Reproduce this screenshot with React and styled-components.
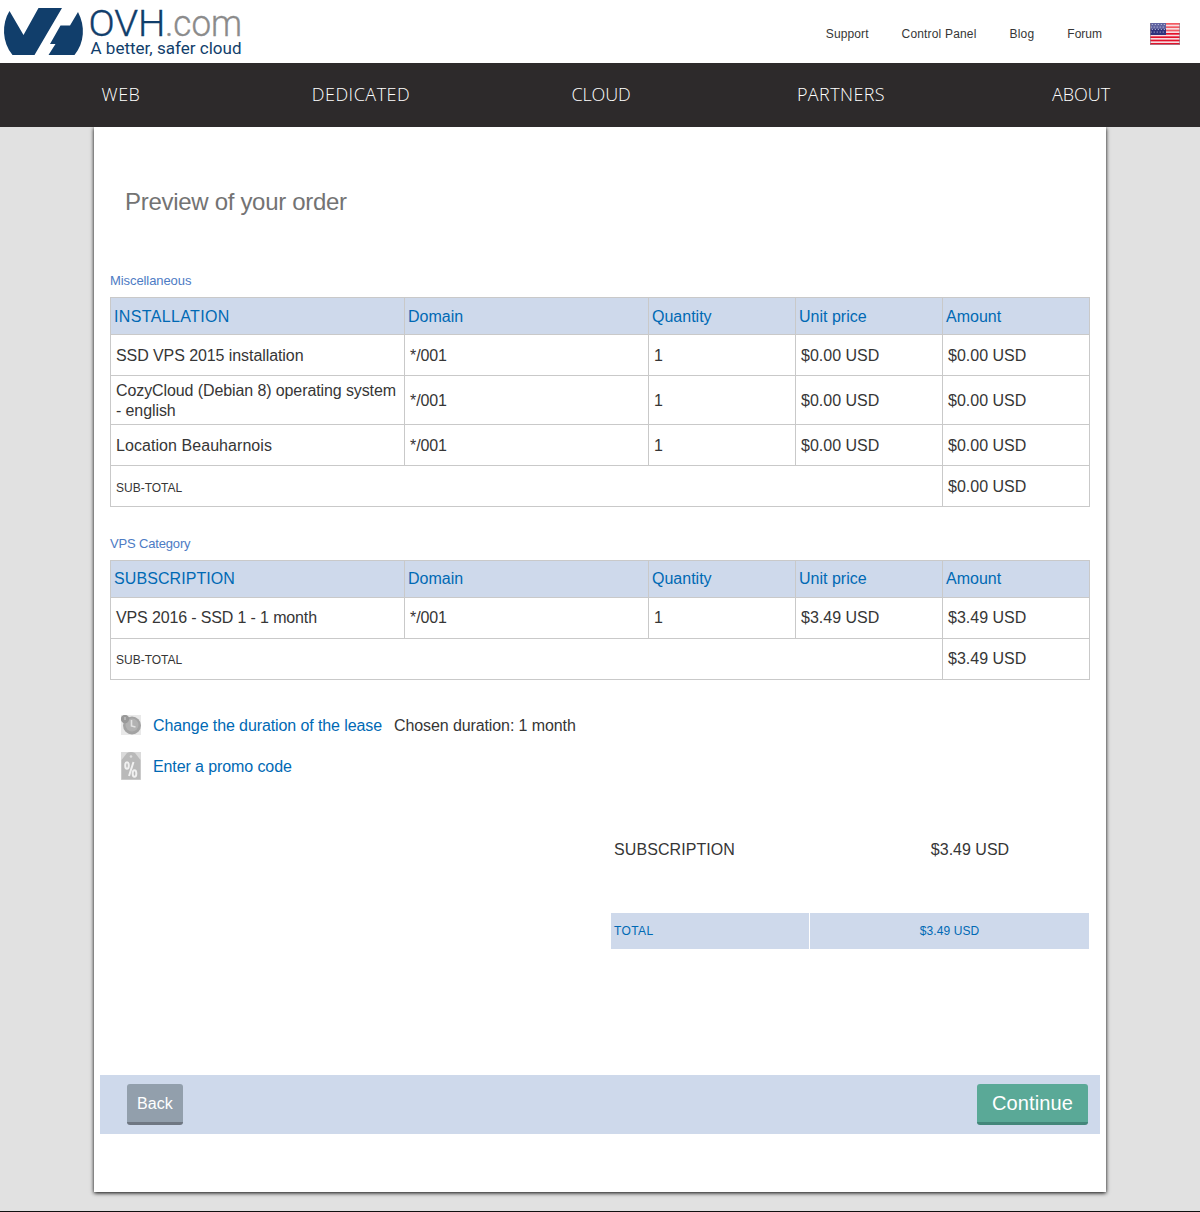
import React from "react";
import styled, { createGlobalStyle, css } from "styled-components";

const ink = "#363636";
const link = "#0069b4";
const band = "#ced9eb";
const line = "#c9c9c9";

const GlobalStyle = createGlobalStyle`
  * { box-sizing: border-box; }
  body {
    margin: 0;
    background: #e1e1e1;
    color: ${ink};
    font-family: "Liberation Sans", Arial, sans-serif;
    font-size: 16px;
    line-height: 20px;
  }
`;

const Screen = styled.div`
  display: flex;
  flex-direction: column;
  width: 1200px;
  height: 1212px;
  border-bottom: 1px solid #111;
`;

const TopBar = styled.header`
  display: flex;
  justify-content: space-between;
  height: 63px;
  background: #fff;
`;

const LogoArt = styled.svg`
  display: block;
  width: 250px;
  height: 63px;
`;

const LogoWord = styled.text`
  font-family: Roboto, sans-serif;
  font-weight: ${(p) => p.$weight};
  font-size: ${(p) => p.$size}px;
  fill: ${(p) => p.$fill};
  stroke: ${(p) => p.$fill};
  stroke-width: ${(p) => p.$stroke || 0}px;
`;

const TopLinks = styled.nav`
  display: flex;
  align-items: center;
  padding: 5px 20px 0 0;
`;

const TopLink = styled.a`
  margin-right: ${(p) => p.$gap || 33}px;
  font-size: 12px;
  line-height: 16px;
  letter-spacing: ${(p) => p.$track || 0}px;
`;

const Flag = styled.svg`
  display: block;
  width: 30px;
  height: 22px;
`;

const MainNav = styled.nav`
  position: relative;
  display: grid;
  grid-template-columns: repeat(5, 240px);
  height: 64px;
  background: #2d2a2b;
`;

const MainLink = styled.a`
  display: flex;
  align-items: center;
  justify-content: center;
  padding: 0 0 2px 2px;
  color: #fff;
  font-family: "Open Sans", sans-serif;
  font-size: 18px;
  font-weight: 300;
  letter-spacing: ${(p) => p.$track}px;
`;

const Sheet = styled.main`
  width: 1012px;
  height: 1065px;
  margin: 0 auto;
  padding: 60px 6px 0;
  background: #fff;
  box-shadow: 0 1px 4px #000;
`;

const Title = styled.h1`
  margin: 0 0 57px;
  padding-left: 25px;
  color: #737373;
  font-size: 24px;
  font-weight: 400;
  line-height: 30px;
  letter-spacing: -0.3px;
`;

const Body = styled.div`
  display: flex;
  flex-direction: column;
  padding: 0 10px;
`;

const Section = styled.section`
  margin-bottom: ${(p) => p.$after}px;
`;

const Caption = styled.h2`
  margin: 0;
  height: 23px;
  color: #4d7bc4;
  font-size: 13px;
  font-weight: 400;
  line-height: 14px;
  letter-spacing: ${(p) => p.$track}px;
`;

const Table = styled.table`
  width: 980px;
  table-layout: fixed;
  border-collapse: collapse;
`;

const Row = styled.tr`
  height: ${(p) => p.$height || 41}px;
`;

const HeadCell = styled.th`
  padding: ${(p) => (p.$lowered ? "1px 3px 0" : "0 3px 1px")};
  border: 1px solid ${line};
  background: ${band};
  color: ${link};
  font-weight: 400;
  text-align: left;
  letter-spacing: ${(p) => p.$track || 0}px;
`;

const Cell = styled.td`
  padding: ${(p) => (p.$lowered ? "2px 5px 0" : "0 5px")};
  border: 1px solid ${line};
  white-space: pre-line;
  letter-spacing: ${(p) => p.$track || 0}px;
  ${(p) =>
    p.$label &&
    css`
      padding-top: ${p.$lowered ? 3 : 1}px;
      font-size: 12px;
    `}
`;

const Options = styled.div`
  display: flex;
  flex-direction: column;
  padding-left: 11px;
`;

const Option = styled.div`
  display: flex;
  align-items: center;
  height: 41px;
  letter-spacing: -0.1px;
`;

const OptionIcon = styled.svg`
  display: block;
  width: 20px;
  height: ${(p) => p.$height}px;
  margin: 0 12px 2px 0;
`;

const OptionLink = styled.a`
  margin-right: 12px;
  color: ${link};
`;

const Summary = styled.div`
  display: grid;
  grid-template-columns: 198px 279px;
  column-gap: 1px;
  align-self: flex-end;
  margin: 43px 1px 0 0;
  width: 478px;
`;

const SummaryLabel = styled.div`
  height: 83px;
  padding: 10px 3px;
  letter-spacing: 0.08px;
`;

const SummaryValue = styled.div`
  height: 83px;
  padding: 10px 0 10px 41px;
  text-align: center;
`;

const TotalCell = styled.div`
  height: 36px;
  padding: ${(p) => (p.$center ? 0 : "0 3px")};
  background: ${band};
  color: ${link};
  font-size: 12px;
  line-height: 36px;
  letter-spacing: ${(p) => (p.$center ? 0.1 : 0.4)}px;
  text-align: ${(p) => (p.$center ? "center" : "left")};
`;

const Actions = styled.footer`
  display: flex;
  justify-content: space-between;
  height: 59px;
  margin-top: 126px;
  padding: 9px 12px 0 27px;
  background: ${band};
`;

const Button = styled.button`
  height: 41px;
  padding: 1px 0 0;
  width: ${(p) => p.$width}px;
  border: 0;
  border-bottom: 3px solid ${(p) => p.$edge};
  border-radius: 3px;
  background: ${(p) => p.$fill};
  color: #fff;
  font-family: inherit;
  font-size: ${(p) => p.$size}px;
  letter-spacing: 0.1px;
`;

const Logo = () => (
  <LogoArt viewBox="0 0 250 63">
    <path
      fill="#113e6b"
      d="M9.5 11 23.5 35 38.5 8H62L34.500 55H12.500C2 42 1.500 24 9.500 11ZM60.500 25.500H70L78 12C85.500 26 84.500 43 74.500 55H48.500L55.500 44H50Z"
    />
    <LogoWord $weight={300} $size={37.5} $stroke={0.35} $fill="#113e6b" x="88.500" y="36" textLength="77" lengthAdjust="spacingAndGlyphs">OVH</LogoWord>
    <LogoWord $weight={300} $size={36} $stroke={0.35} $fill="#8b8b8b" x="165" y="36" textLength="77" lengthAdjust="spacingAndGlyphs">.com</LogoWord>
    <LogoWord $weight={400} $size={16.5} $fill="#113e6b" x="90.500" y="53.500" textLength="151" lengthAdjust="spacingAndGlyphs">A better, safer cloud</LogoWord>
  </LogoArt>
);

const UsFlag = () => (
  <Flag viewBox="0 0 30 22">
    <rect width="30" height="22" fill="#f7dfe3" />
    {[0, 1, 2, 3, 4, 5, 6].map((i) => (
      <rect key={i} y={i * 3.33} width="30" height="1.700" fill={i < 3 ? "#f25a62" : "#e3122b"} />
    ))}
    <rect width="16" height="12" fill="#2f327c" />
    <rect width="16" height="6" fill="#6063a0" />
    {[1.5, 4, 6.5, 9].map((y, r) =>
      [2, 5, 8, 11, 14].map((x) => (
        <circle key={`${x}-${y}`} cx={x + (r % 2 ? -0.8 : 0.3)} cy={y} r="0.6" fill="#d5d6ea" />
      ))
    )}
    <path d="M.5 0V21.500H29.500V0" fill="none" stroke="#8d7b88" strokeOpacity=".65" />
  </Flag>
);

const ClockIcon = () => (
  <OptionIcon $height={20} viewBox="0 0 20 20">
    <rect width="20" height="20" fill="#e9e9e9" />
    <circle cx="11" cy="10.500" r="9" fill="#a3a3a3" />
    <circle cx="11" cy="10" r="6.500" fill="#b2b2b2" />
    <path d="M10.500 5V11L14.500 12" fill="none" stroke="#e2e2e2" strokeWidth="1.600" />
    <circle cx="4" cy="4" r="4.200" fill="#999" />
    <path d="M4 2V5" stroke="#c9c9c9" strokeWidth="1.200" />
  </OptionIcon>
);

const PromoIcon = () => (
  <OptionIcon $height={28} viewBox="0 0 20 28">
    <rect width="20" height="28" fill="#dadada" />
    <path d="M6 1Q10-1 14 1L19.500 8V27.500H.5V8Z" fill="#b9b9b9" />
    <circle cx="10" cy="4.500" r="1.300" fill="#dedede" />
    <g fill="none" stroke="#f0f0f0" strokeWidth="2">
      <ellipse cx="6" cy="13.500" rx="1.800" ry="3.300" />
      <ellipse cx="13.500" cy="21.500" rx="1.800" ry="3.300" />
      <path d="M12.500 10 8 24" />
    </g>
  </OptionIcon>
);

const OrderTable = ({ kind, kindTrack, items, subtotal, loweredHead, loweredRows }) => (
  <Table>
    <colgroup>
      <col width="294" />
      <col width="244" />
      <col width="147" />
      <col width="147" />
      <col width="147" />
    </colgroup>
    <thead>
      <Row $height={37}>
        <HeadCell $track={kindTrack} $lowered={loweredHead}>{kind}</HeadCell>
        {["Domain", "Quantity", "Unit price", "Amount"].map((name) => (
          <HeadCell key={name} $lowered={loweredHead}>{name}</HeadCell>
        ))}
      </Row>
    </thead>
    <tbody>
      {items.map(({ name, price, height, track }) => (
        <Row key={name} $height={height}>
          <Cell $track={track} $lowered={loweredRows}>{name}</Cell>
          <Cell $track={-0.1} $lowered={loweredRows}>*/001</Cell>
          <Cell $lowered={loweredRows}>1</Cell>
          <Cell $lowered={loweredRows}>{price}</Cell>
          <Cell $lowered={loweredRows}>{price}</Cell>
        </Row>
      ))}
      <Row>
        <Cell $label $lowered={loweredRows} colSpan={4}>SUB-TOTAL</Cell>
        <Cell $lowered={loweredRows}>{subtotal}</Cell>
      </Row>
    </tbody>
  </Table>
);

const sections = [
  ["WEB", 0.5],
  ["DEDICATED", 0.5],
  ["CLOUD", -0.2],
  ["PARTNERS", 0.4],
  ["ABOUT", 0],
];

export default function App() {
  return (
    <Screen>
      <GlobalStyle />
      <TopBar>
        <Logo />
        <TopLinks>
          <TopLink $track={0.1}>Support</TopLink>
          <TopLink $track={0.17}>Control Panel</TopLink>
          <TopLink $track={0.2}>Blog</TopLink>
          <TopLink $gap={48}>Forum</TopLink>
          <UsFlag />
        </TopLinks>
      </TopBar>
      <MainNav>
        {sections.map(([name, track]) => (
          <MainLink key={name} $track={track}>{name}</MainLink>
        ))}
      </MainNav>
      <Sheet>
        <Title>Preview of your order</Title>
        <Body>
          <Section $after={30}>
            <Caption $track={-0.08}>Miscellaneous</Caption>
            <OrderTable
              kind="INSTALLATION"
              kindTrack={0.35}
              loweredHead
              loweredRows
              items={[
                { name: "SSD VPS 2015 installation", price: "$0.00 USD", track: -0.08 },
                { name: "CozyCloud (Debian 8) operating system\n- english", price: "$0.00 USD", track: -0.1, height: 49 },
                { name: "Location Beauharnois", price: "$0.00 USD", track: 0.06 },
              ]}
              subtotal="$0.00 USD"
            />
          </Section>
          <Section $after={25}>
            <Caption $track={-0.16}>VPS Category</Caption>
            <OrderTable
              kind="SUBSCRIPTION"
              kindTrack={0.08}
              items={[{ name: "VPS 2016 - SSD 1 - 1 month", price: "$3.49 USD", track: -0.14 }]}
              subtotal="$3.49 USD"
            />
          </Section>
          <Options>
            <Option>
              <ClockIcon />
              <OptionLink>Change the duration of the lease</OptionLink>
              <span>Chosen duration: 1 month</span>
            </Option>
            <Option>
              <PromoIcon />
              <OptionLink>Enter a promo code</OptionLink>
            </Option>
          </Options>
          <Summary>
            <SummaryLabel>SUBSCRIPTION</SummaryLabel>
            <SummaryValue>$3.49 USD</SummaryValue>
            <TotalCell>TOTAL</TotalCell>
            <TotalCell $center>$3.49 USD</TotalCell>
          </Summary>
        </Body>
        <Actions>
          <Button $width={56} $size={16} $fill="#929fac" $edge="#6f7782">Back</Button>
          <Button $width={111} $size={20} $fill="#5aa997" $edge="#43877a">Continue</Button>
        </Actions>
      </Sheet>
    </Screen>
  );
}
